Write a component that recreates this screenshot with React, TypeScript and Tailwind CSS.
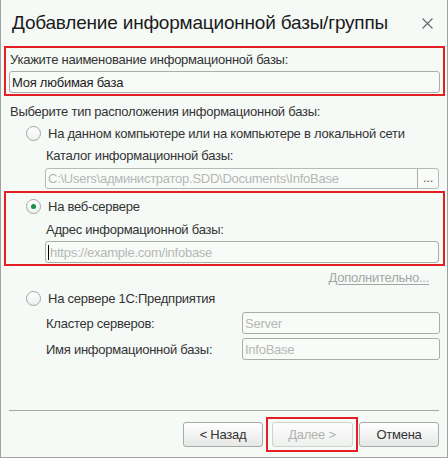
const Radio = ({ checked }: { checked?: boolean }) => (
  <span className="w-[15px] h-[15px] rounded-full border border-[#a3a6a3] bg-gradient-to-b from-white to-[#eef0ee] flex items-center justify-center shrink-0">
    {checked && <span className="w-[5px] h-[5px] rounded-full bg-[#17924a]" />}
  </span>
);

const Field = ({ value, placeholder, className }: { value?: string; placeholder?: string; className: string }) => (
  <div className={`h-[22px] rounded-[3px] border border-[#a9aea9] bg-[#f9fbf9] flex items-center px-[2px] ${className}`}>
    {value ? (
      <span className="text-[#222]">{value}</span>
    ) : (
      <span className="text-[#b4b8b4]">{placeholder}</span>
    )}
  </div>
);

const Button = ({ label, disabled }: { label: string; disabled?: boolean }) => (
  <button
    className={`h-[25px] rounded-[3px] border flex items-center justify-center bg-gradient-to-b ${
      disabled
        ? "w-[81px] border-[#cfd2cf] from-[#fbfcfb] to-[#eff1ef] text-[#b0b3b0]"
        : "w-[80px] border-[#a8aca8] from-white to-[#e6e8e6] text-[#333]"
    }`}
  >
    {label}
  </button>
);

export default function App() {
  return (
    <div className="w-[448px] h-[458px] bg-[#f6faf7] border-x border-b border-[#9ea49f] flex flex-col font-['Liberation_Sans',Arial,sans-serif] text-[13px] leading-[15px] tracking-[-0.25px] text-[#333]">
      <div className="h-[46px] flex items-center justify-between pl-[11px] pr-[14px]">
        <span className="text-[19px] leading-[24px] tracking-[-0.2px] text-[#1b1b1b]">Добавление информационной базы/группы</span>
        <svg width="11" height="11" viewBox="0 0 11 11">
          <path d="M0.5 0.5 L10.5 10.5 M10.5 0.5 L0.5 10.5" stroke="#666" strokeWidth="1.1" />
        </svg>
      </div>

      <div className="ml-[3px] w-[441px] h-[50px] border-2 border-[#e31e24] pl-[3px] pt-[4px]">
        <div className="h-[15px] pl-[1px]">Укажите наименование информационной базы:</div>
        <Field className="mt-[4px] w-[431px]" value="Моя любимая база" />
      </div>

      <div className="mt-[8px] h-[15px] pl-[9px]">Выберите тип расположения информационной базы:</div>

      <div className="mt-[7px] h-[15px] ml-[25px] flex items-center gap-[7px]">
        <Radio />
        <span>На данном компьютере или на компьютере в локальной сети</span>
      </div>
      <div className="mt-[7px] h-[15px] ml-[45px]">Каталог информационной базы:</div>
      <div className="mt-[5px] ml-[44px] w-[394px] h-[21px] rounded-[3px] border border-[#b7bbb7] bg-[#f9fbf9] flex">
        <div className="flex-1 flex items-center px-[2px] text-[#b4b8b4]">
          C:\Users\администратор.SDD\Documents\InfoBase
        </div>
        <div className="w-[21px] border-l border-[#a9aea9] flex items-center justify-center text-[#555] pb-[3px]">...</div>
      </div>

      <div className="mt-[2px] ml-[3px] w-[441px] h-[75px] border-2 border-[#e31e24] pl-[20px] pt-[6px]">
        <div className="h-[15px] flex items-center gap-[7px]">
          <Radio checked />
          <span>На веб-сервере</span>
        </div>
        <div className="mt-[8px] h-[15px] pl-[20px]">Адрес информационной базы:</div>
        <div className="mt-[4px] ml-[19px] w-[394px] h-[22px] rounded-[3px] border border-[#a9aea9] bg-[#f9fbf9] flex items-center px-[2px]">
          <span className="w-px h-[15px] bg-black mr-[1px]" />
          <span className="text-[#b4b8b4]">https://example.com/infobase</span>
        </div>
      </div>

      <div className="mt-[4px] h-[15px] self-end mr-[18px] text-[#a3a7a3] underline underline-offset-2 decoration-[#a3a7a3]">
        Дополнительно...
      </div>

      <div className="mt-[6px] h-[15px] ml-[25px] flex items-center gap-[7px]">
        <Radio />
        <span>На сервере 1С:Предприятия</span>
      </div>
      <div className="mt-[6px] ml-[45px] flex items-center justify-between w-[394px]">
        <span>Кластер серверов:</span>
        <Field className="w-[198px]" placeholder="Server" />
      </div>
      <div className="mt-[4px] ml-[45px] flex items-center justify-between w-[394px]">
        <span>Имя информационной базы:</span>
        <Field className="w-[198px]" placeholder="InfoBase" />
      </div>

      <div className="mt-[50px] ml-[8px] w-[430px] h-px bg-[#a4a8a4]" />

      <div className="mt-[6px] h-[35px] flex items-center justify-end pr-[8px]">
        <Button label="< Назад" />
        <div className="ml-[3px] w-[92px] h-[35px] border-2 border-[#e31e24] flex items-center justify-center">
          <Button label="Далее >" disabled />
        </div>
        <div className="ml-[1px]">
          <Button label="Отмена" />
        </div>
      </div>
    </div>
  );
}
